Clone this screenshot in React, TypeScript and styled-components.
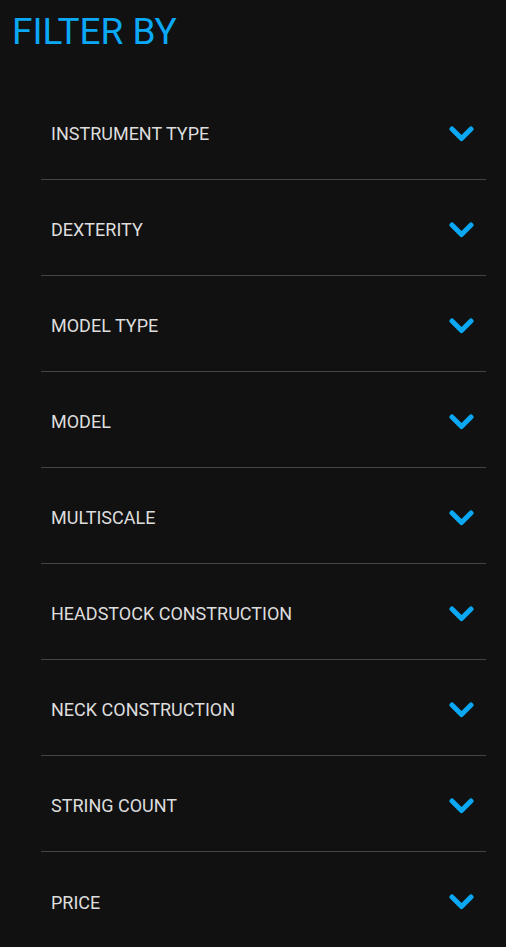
import React from 'react'
import styled, { createGlobalStyle } from 'styled-components'

const filters = [
  'INSTRUMENT TYPE',
  'DEXTERITY',
  'MODEL TYPE',
  'MODEL',
  'MULTISCALE',
  'HEADSTOCK CONSTRUCTION',
  'NECK CONSTRUCTION',
  'STRING COUNT',
  'PRICE',
]

const Chevron = () => (
  <svg width="25" height="16" viewBox="0 0 25 16">
    <polyline
      points="3,3 12.5,12.5 22,3"
      fill="none"
      stroke="#0aa8f5"
      strokeWidth="5"
      strokeLinecap="round"
      strokeLinejoin="round"
    />
  </svg>
)

export default function App() {
  return (
    <>
      <Global />
      <S.Page>
        <S.Title>FILTER BY</S.Title>
        <S.List>
          {filters.map(f => (
            <S.Row key={f}>
              <S.Label>{f}</S.Label>
              <Chevron />
            </S.Row>
          ))}
        </S.List>
      </S.Page>
    </>
  )
}

const Global = createGlobalStyle`
  html, body {
    margin: 0;
    padding: 0;
    background: #111111;
  }
  body {
    font-family: Roboto, "Liberation Sans", sans-serif;
  }
`

const S = {
  Page: styled.div`
    width: 506px;
    height: 947px;
    background: #111111;
    overflow: hidden;
    display: flex;
    flex-direction: column;
  `,
  Title: styled.h1`
    margin: 0;
    padding: 10px 0 0 12px;
    height: 84px;
    flex-shrink: 0;
    box-sizing: border-box;
    font-size: 37px;
    font-weight: 400;
    line-height: 43px;
    color: #0aa8f5;
  `,
  List: styled.div`
    margin: 0 20px 0 41px;
    display: flex;
    flex-direction: column;
  `,
  Row: styled.div`
    height: 96px;
    flex-shrink: 0;
    box-sizing: border-box;
    display: flex;
    align-items: center;
    justify-content: space-between;
    padding: 4px 12px 0 10px;
    border-bottom: 1px solid #444444;
    cursor: pointer;
    &:last-child {
      border-bottom: none;
    }
  `,
  Label: styled.span`
    font-size: 18px;
    font-weight: 400;
    color: #dddddd;
  `,
}
